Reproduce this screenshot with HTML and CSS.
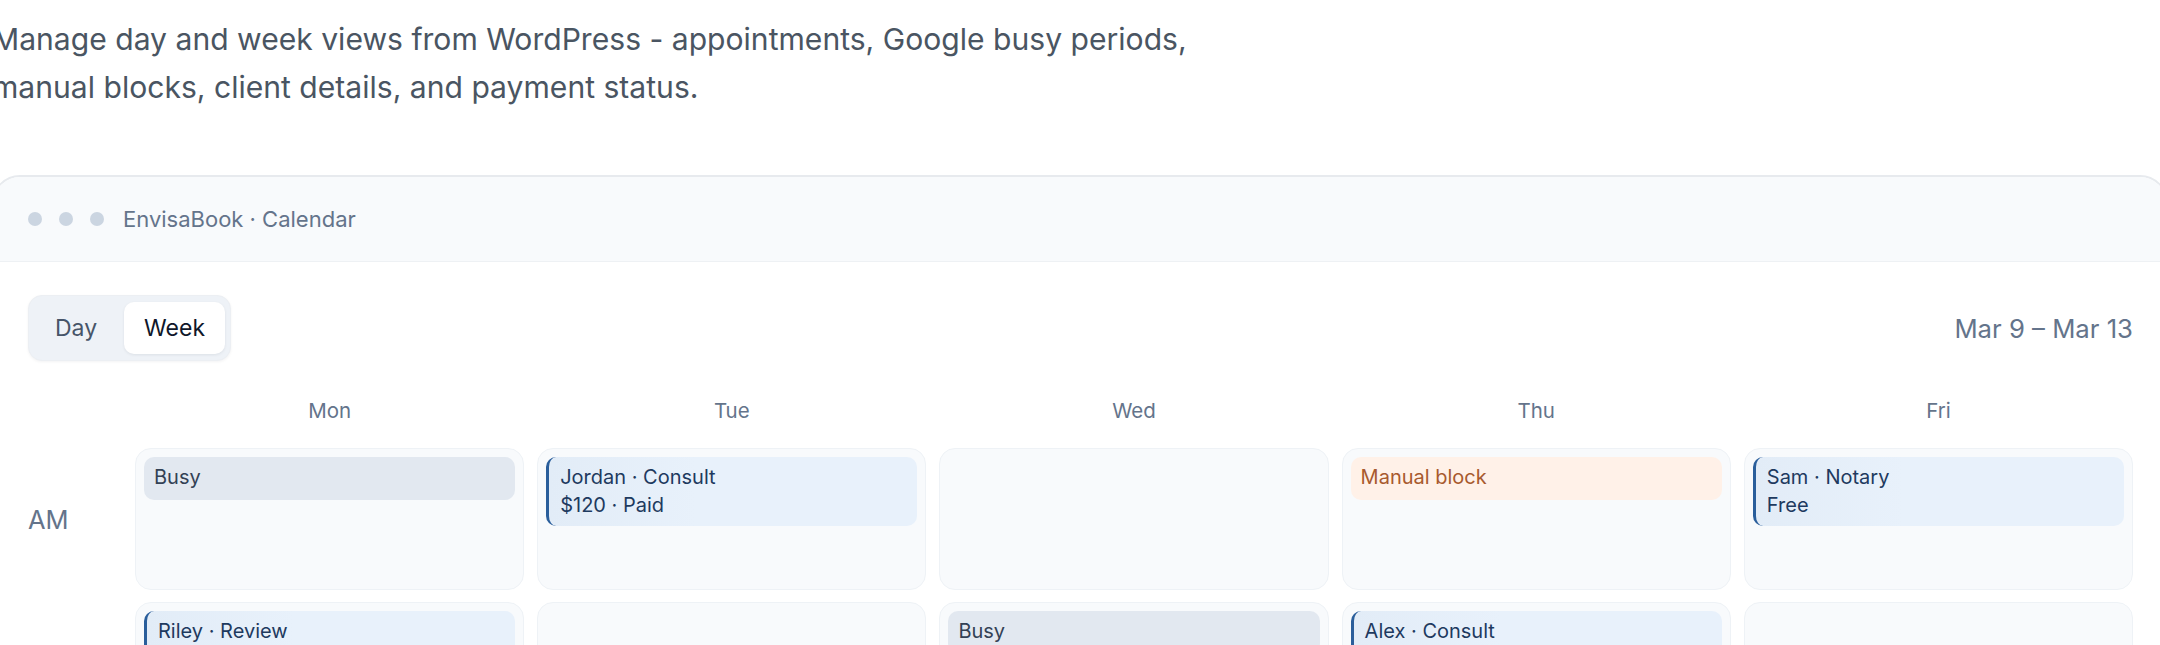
FILE: index.html
```html
<!DOCTYPE html>
<html lang="en">
<head>
<meta charset="utf-8">
<title>EnvisaBook Calendar</title>
<link rel="stylesheet" href="styles.css">
</head>
<body>
<div class="page">
  <p class="lead">Manage day and week views from WordPress - appointments, Google busy periods,<br>manual blocks, client details, and payment status.</p>

  <section class="card">
    <header class="titlebar">
      <span class="dots"><i></i><i></i><i></i></span>
      <span class="app-title">EnvisaBook · Calendar</span>
    </header>

    <div class="card-body">
      <div class="toolbar">
        <div class="seg">
          <button class="seg-btn">Day</button>
          <button class="seg-btn active">Week</button>
        </div>
        <div class="range">Mar 9 – Mar 13</div>
      </div>

      <div class="week-head">
        <span></span>
        <span>Mon</span>
        <span>Tue</span>
        <span>Wed</span>
        <span>Thu</span>
        <span>Fri</span>
      </div>

      <div class="week-grid">
        <div class="slot-label">AM</div>
        <div class="cell"><div class="ev busy">Busy</div></div>
        <div class="cell"><div class="ev appt">Jordan · Consult<br>$120 · Paid</div></div>
        <div class="cell"></div>
        <div class="cell"><div class="ev block">Manual block</div></div>
        <div class="cell"><div class="ev appt">Sam · Notary<br>Free</div></div>

        <div class="slot-label">PM</div>
        <div class="cell"><div class="ev appt">Riley · Review<br>$80 · Unpaid</div></div>
        <div class="cell"></div>
        <div class="cell"><div class="ev busy">Busy</div></div>
        <div class="cell"><div class="ev appt">Alex · Consult<br>$120 · Paid</div></div>
        <div class="cell"></div>
      </div>
    </div>
  </section>
</div>
</body>
</html>
```
FILE: styles.css
```css
html, body {
  margin: 0;
  padding: 0;
  background: #ffffff;
}

body {
  font-family: Inter, "Noto Sans", "Liberation Sans", sans-serif;
  color: #334155;
  overflow: hidden;
}

.page {
  width: 2176px;
  margin-left: -8px;
}

.lead {
  margin: 15px 0 0 0;
  font-size: 30.1px;
  line-height: 48px;
  color: #4a5562;
}

.card {
  margin-top: 64px;
  border: 2px solid #e7eaee;
  border-radius: 28px;
  overflow: hidden;
  background: #ffffff;
}

.titlebar {
  height: 84px;
  display: flex;
  align-items: center;
  gap: 19px;
  padding: 0 34px;
  background: #f8fafc;
  border-bottom: 1px solid #eef1f4;
}

.dots {
  display: flex;
  gap: 17px;
}

.dots i {
  width: 14px;
  height: 14px;
  border-radius: 50%;
  background: #cbd5e1;
}

.app-title {
  font-size: 22px;
  color: #64748b;
}

.card-body {
  padding: 33px 33px 0 34px;
}

.toolbar {
  display: flex;
  justify-content: space-between;
  align-items: center;
  height: 66px;
}

.seg {
  display: flex;
  align-items: center;
  height: 66px;
  padding: 0 5px 0 0;
  box-sizing: border-box;
  background: #eef2f7;
  border: 1px solid #eceff3;
  border-radius: 14px;
  box-shadow: 0 1px 3px rgba(15, 23, 42, 0.05);
}

.seg-btn {
  font-family: inherit;
  font-size: 23px;
  border: 0;
  background: transparent;
  color: #475569;
  height: 52px;
  padding: 0 20px;
  border-radius: 10px;
  cursor: pointer;
}

.seg-btn:first-child {
  padding: 0 27px 0 26px;
}

.seg-btn.active {
  background: #ffffff;
  color: #0f172a;
  box-shadow: 0 1px 3px rgba(15, 23, 42, 0.08);
}

.range {
  font-size: 25.7px;
  color: #64748b;
}

.week-head {
  display: grid;
  grid-template-columns: 94px repeat(5, 1fr);
  column-gap: 13px;
  margin-top: 36px;
  margin-bottom: 23px;
  font-size: 20.5px;
  line-height: 28px;
  color: #64748b;
  text-align: center;
}

.week-grid {
  display: grid;
  grid-template-columns: 94px repeat(5, 1fr);
  grid-auto-rows: 142px;
  column-gap: 13px;
  row-gap: 12px;
}

.slot-label {
  display: flex;
  align-items: center;
  font-size: 25.5px;
  color: #64748b;
}

.cell {
  box-sizing: border-box;
  background: #f8fafc;
  border: 1px solid #eef2f6;
  border-radius: 16px;
  padding: 8px;
}

.ev {
  font-size: 20px;
  line-height: 27.5px;
  padding: 7px 11px 8px 10px;
  border-radius: 10px;
}

.ev.busy {
  background: #e2e8f0;
  color: #334155;
}

.ev.block {
  background: #fff1e8;
  color: #a85a2e;
}

.ev.appt {
  background: linear-gradient(90deg, #e2ecf7 0%, #e8f1fb 40%, #e8f1fb 100%);
  border-left: 3px solid #2a5e9b;
  color: #1e3a5f;
  padding: 7px 12px 7px 11px;
}
```
